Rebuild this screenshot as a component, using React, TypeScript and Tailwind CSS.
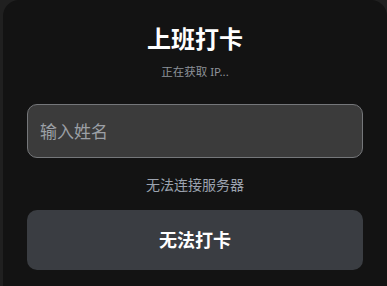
export default function App() {
  return (
    <div
      className="h-[286px] overflow-hidden bg-[#202020] pl-[3px]"
      style={{ fontFamily: '"Noto Sans", "Noto Sans CJK SC", sans-serif' }}
    >
      <div className="h-[320px] w-[384px] rounded-2xl bg-[#131313] px-[24px] pt-[23px]">
        <div className="text-center text-[24px] leading-[32px] font-bold text-white">上班打卡</div>
        <div className="mt-[9px] text-center text-[11.5px] leading-[16px] text-[#8d9299]">正在获取 IP...</div>
        <input
          className="mt-[24px] h-[54px] w-full rounded-[10px] border border-[#75777a] bg-[#3b3b3b] px-[12px] text-[17px] text-white outline-none placeholder:text-[#9ca0a6]"
          placeholder="输入姓名"
        />
        <div className="mt-[17px] text-center text-[14px] leading-[20px] text-[#9ca3af]">无法连接服务器</div>
        <button className="mt-[15px] h-[60px] w-full rounded-[10px] bg-[#3a3d42] text-[18px] font-bold text-white">
          无法打卡
        </button>
      </div>
    </div>
  )
}
